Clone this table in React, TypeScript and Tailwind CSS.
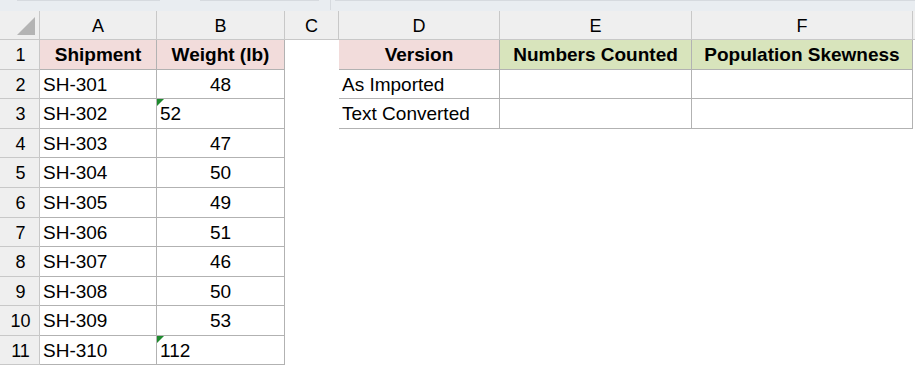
import React from "react"

const font = { fontFamily: "'Liberation Sans', Arial, sans-serif" }

type Cell = {
  text?: string
  align?: "left" | "center"
  bold?: boolean
  bg?: string
  bordered?: boolean
  flag?: boolean
}

const colWidths = [117, 128, 54, 161, 192, 221]
const letters = ["A", "B", "C", "D", "E", "F"]
const rowHeights = [30, 29, 30, 29, 30, 30, 29, 30, 29, 30, 29]

const shipments: [string, string, boolean][] = [
  ["SH-301", "48", false],
  ["SH-302", "52", true],
  ["SH-303", "47", false],
  ["SH-304", "50", false],
  ["SH-305", "49", false],
  ["SH-306", "51", false],
  ["SH-307", "46", false],
  ["SH-308", "50", false],
  ["SH-309", "53", false],
  ["SH-310", "112", true],
]

function buildRows(): Cell[][] {
  const rows: Cell[][] = []
  rows.push([
    { text: "Shipment", align: "center", bold: true, bg: "bg-[#f2dcdb]", bordered: true },
    { text: "Weight (lb)", align: "center", bold: true, bg: "bg-[#f2dcdb]", bordered: true },
    {},
    { text: "Version", align: "center", bold: true, bg: "bg-[#f2dcdb]", bordered: true },
    { text: "Numbers Counted", align: "center", bold: true, bg: "bg-[#d8e4bc]", bordered: true },
    { text: "Population Skewness", align: "center", bold: true, bg: "bg-[#d8e4bc]", bordered: true },
  ])
  shipments.forEach(([id, w, flag], i) => {
    const row: Cell[] = [
      { text: id, bordered: true },
      flag ? { text: w, bordered: true, flag: true } : { text: w, align: "center", bordered: true },
      {},
    ]
    if (i === 0) row.push({ text: "As Imported", bordered: true }, { bordered: true }, { bordered: true })
    else if (i === 1) row.push({ text: "Text Converted", bordered: true }, { bordered: true }, { bordered: true })
    else row.push({}, {}, {})
    rows.push(row)
  })
  return rows
}

function GridCell({ cell, width, height }: { cell: Cell; width: number; height: number }) {
  return (
    <div
      className={`relative shrink-0 flex items-center overflow-hidden whitespace-nowrap text-[19px] text-black ${cell.bg ?? "bg-white"} ${
        cell.bordered ? "border-r border-b border-[#b2b2b2]" : "border-r border-b border-transparent"
      } ${cell.align === "center" ? "justify-center" : "justify-start pl-[3px]"} ${cell.bold ? "font-bold" : ""}`}
      style={{ width, height }}
    >
      {cell.flag && (
        <span className="absolute left-0 top-0 w-0 h-0 border-t-[7px] border-r-[7px] border-t-[#1e8a2e] border-r-transparent" />
      )}
      <span className="pt-[2px]">{cell.text}</span>
    </div>
  )
}

export default function App() {
  const rows = buildRows()
  return (
    <div className="w-[915px] h-[366px] bg-white overflow-hidden" style={font}>
      {/* formula bar edge */}
      <div className="h-[11px] bg-[#e9edf1] flex items-start">
        <div className="ml-[17px] w-[143px] h-px bg-[#d6dadf]" />
        <div className="ml-[40px] w-[119px] h-px bg-[#d6dadf]" />
        <div className="ml-[11px] w-px h-[10px] bg-[#d6dadf]" />
        <div className="ml-[4px] flex-1 h-px bg-[#d6dadf]" />
      </div>

      {/* column headers */}
      <div className="flex h-[29px] bg-[#efefef]">
        <div className="relative w-[40px] shrink-0 border-r border-b border-[#c8c8c8]">
          <span className="absolute right-[4px] bottom-[4px] w-0 h-0 border-b-[18px] border-l-[18px] border-b-[#b4b4b4] border-l-transparent" />
        </div>
        {letters.map((l, i) => (
          <div
            key={l}
            className="shrink-0 flex items-center justify-center border-r border-b border-[#c8c8c8] text-[18px] text-black"
            style={{ width: colWidths[i] }}
          >
            <span className="pt-[2px]">{l}</span>
          </div>
        ))}
        <div className="flex-1 border-b border-[#c8c8c8]" />
      </div>

      {/* rows */}
      {rows.map((row, r) => (
        <div key={r} className="flex">
          <div
            className="w-[40px] shrink-0 flex items-center justify-center bg-[#efefef] border-r border-b border-[#c8c8c8] text-[18px] text-black"
            style={{ height: rowHeights[r] }}
          >
            <span className="pl-[2px] pt-[2px]">{r + 1}</span>
          </div>
          {row.map((cell, c) => (
            <GridCell key={c} cell={cell} width={colWidths[c]} height={rowHeights[r]} />
          ))}
        </div>
      ))}
    </div>
  )
}
